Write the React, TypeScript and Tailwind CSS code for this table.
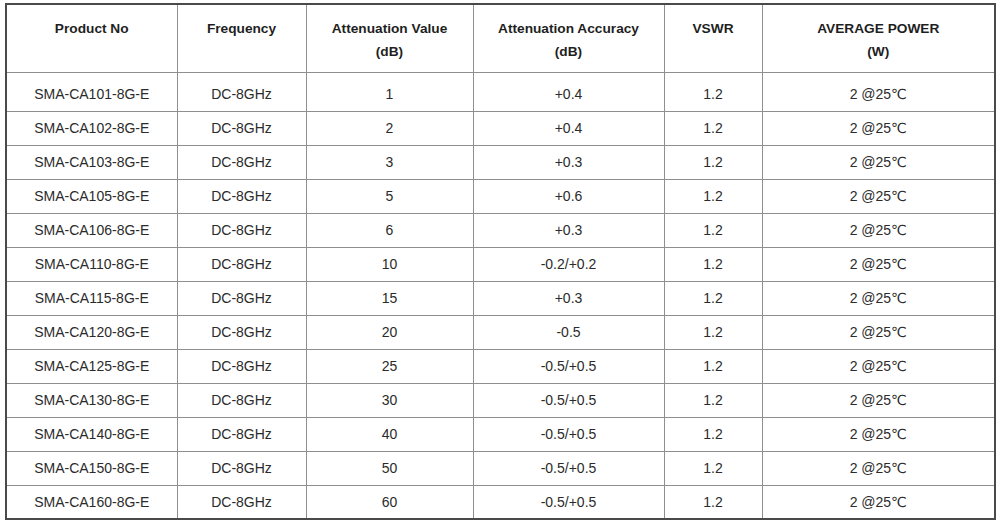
const HEADERS = [
  ["Product No"],
  ["Frequency"],
  ["Attenuation Value", "(dB)"],
  ["Attenuation Accuracy", "(dB)"],
  ["VSWR"],
  ["AVERAGE POWER", "(W)"],
];

const ROWS: Array<[string, string, string]> = [
  ["101", "1", "+0.4"],
  ["102", "2", "+0.4"],
  ["103", "3", "+0.3"],
  ["105", "5", "+0.6"],
  ["106", "6", "+0.3"],
  ["110", "10", "-0.2/+0.2"],
  ["115", "15", "+0.3"],
  ["120", "20", "-0.5"],
  ["125", "25", "-0.5/+0.5"],
  ["130", "30", "-0.5/+0.5"],
  ["140", "40", "-0.5/+0.5"],
  ["150", "50", "-0.5/+0.5"],
  ["160", "60", "-0.5/+0.5"],
];

const COL_WIDTHS = ["w-[171px]", "w-[129px]", "w-[167px]", "w-[191px]", "w-[98px]", "w-[233px]"];

export default function App() {
  return (
    <div className="w-[1000px] h-[524px] bg-white pl-[5px] pt-[3px] font-['Liberation_Sans',Arial,sans-serif]">
      <table className="table-fixed w-[989px] border-collapse border-2 border-[#4a4a4a] text-center">
        <colgroup>
          {COL_WIDTHS.map((w) => (
            <col key={w} className={w} />
          ))}
        </colgroup>
        <thead>
          <tr className="h-[68px]">
            {HEADERS.map((lines, i) => (
              <th
                key={i}
                className="align-top pt-[12px] border border-[#8e8e8e] text-[13.7px] leading-[23px] font-bold text-[#1f1f1f]"
              >
                {lines.map((l) => (
                  <div key={l}>{l}</div>
                ))}
              </th>
            ))}
          </tr>
        </thead>
        <tbody className="text-[14px] text-[#2b2b2b]">
          {ROWS.map(([no, val, acc], i) => (
            <tr key={no} className={i === 0 ? "h-[39px]" : "h-[34px]"}>
              {[`SMA-CA${no}-8G-E`, "DC-8GHz", val, acc, "1.2", "2 @25\u2103"].map((c, j) => (
                <td
                  key={j}
                  className={`border border-[#8e8e8e] align-middle ${i === 0 ? "pt-[6px]" : "pt-[1px]"} font-['Liberation_Sans','DejaVu_Sans',sans-serif]`}
                >
                  {c}
                </td>
              ))}
            </tr>
          ))}
        </tbody>
      </table>
    </div>
  );
}
